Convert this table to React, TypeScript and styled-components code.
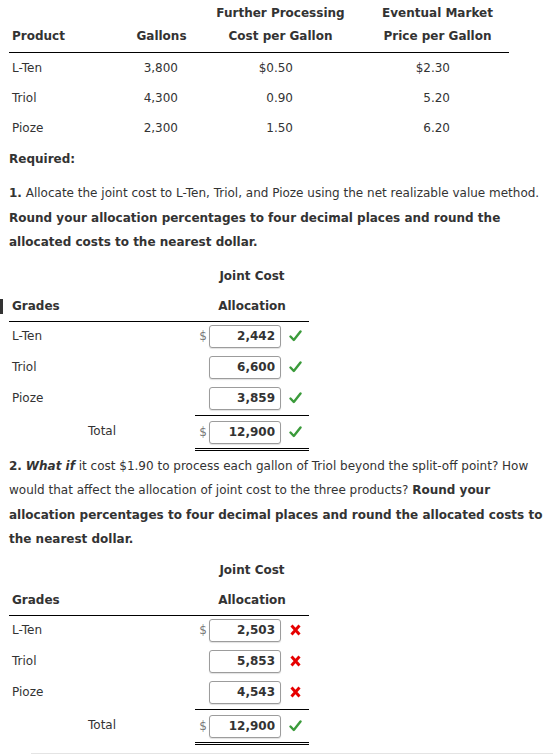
import React from "react";
import styled, { createGlobalStyle } from "styled-components";

const Global = createGlobalStyle`
  html, body { margin: 0; padding: 0; background: #fff; }
  body {
    font-family: "DejaVu Sans", Verdana, sans-serif;
    font-size: 12px;
    color: #333;
  }
`;

const Page = styled.div`
  width: 553px;
  box-sizing: border-box;
  padding: 2px 0 0 9px;
`;

/* ---------- product table ---------- */
const ProductGrid = styled.div`
  display: grid;
  grid-template-columns: 119px 67px 171px 143px;
  width: 500px;
`;

const HeadCell = styled.div<{ $align?: "left" | "center"; $pl?: number }>`
  display: flex;
  flex-direction: column;
  justify-content: flex-end;
  height: 46px;
  padding: 0 0 4px ${(p) => p.$pl ?? 0}px;
  border-bottom: 1px solid #000;
  font-weight: bold;
  line-height: 23px;
  text-align: ${(p) => p.$align ?? "center"};
  white-space: nowrap;
`;

const BodyCell = styled.div<{ $align?: "left" | "right"; $pr?: number; $pl?: number }>`
  height: 30px;
  line-height: 30px;
  text-align: ${(p) => p.$align ?? "right"};
  padding: 0 ${(p) => p.$pr ?? 0}px 0 ${(p) => p.$pl ?? 0}px;
  white-space: nowrap;
`;

/* ---------- text ---------- */
const Heading = styled.div`
  margin-top: 4px;
  line-height: 24px;
  font-weight: bold;
`;

const Para = styled.p<{ $mt: number }>`
  margin: ${(p) => p.$mt}px 0 0;
  line-height: 24.5px;
`;

/* ---------- allocation table ---------- */
const AllocGrid = styled.div<{ $mt: number }>`
  display: grid;
  grid-template-columns: 186px 14px 72px 28px;
  width: 300px;
  margin-top: ${(p) => p.$mt}px;
`;

const AllocHead = styled.div<{ $span?: number; $line?: boolean; $marker?: boolean; $pl?: number }>`
  position: relative;
  grid-column: span ${(p) => p.$span ?? 1};
  height: 30px;
  line-height: 30px;
  font-weight: bold;
  text-align: ${(p) => (p.$span ? "center" : "left")};
  padding-left: ${(p) => p.$pl ?? 0}px;
  border-bottom: ${(p) => (p.$line ? "1px solid #000" : "none")};
  &::before {
    content: "";
    display: ${(p) => (p.$marker ? "block" : "none")};
    position: absolute;
    left: -9px;
    top: 8px;
    width: 3px;
    height: 15px;
    background: #333;
  }
`;

const Cell = styled.div<{ $total?: boolean; $ruled?: boolean; $justify?: string; $pl?: number; $pr?: number }>`
  display: flex;
  align-items: center;
  justify-content: ${(p) => p.$justify ?? "flex-start"};
  height: 23px;
  padding: ${(p) => (p.$total ? "5px 0 4px" : "3px 0 5px")};
  padding-left: ${(p) => p.$pl ?? 0}px;
  padding-right: ${(p) => p.$pr ?? 0}px;
  border-top: ${(p) => (p.$ruled ? "1px solid #000" : "none")};
  border-bottom: ${(p) => (p.$ruled ? "3px double #000" : "none")};
  white-space: nowrap;
`;

const Dollar = styled.span`
  color: #7a7a7a;
`;

const AmountBox = styled.input`
  box-sizing: border-box;
  width: 72px;
  height: 23px;
  margin: 0;
  padding: 0 5px;
  border: 1px solid #9c9c9c;
  border-radius: 3px;
  box-shadow: 0 1px 1px rgba(0, 0, 0, 0.12);
  background: #fff;
  font-family: inherit;
  font-size: 12px;
  font-weight: bold;
  color: #333;
  text-align: right;
  outline: none;
`;

const Divider = styled.div`
  height: 1px;
  margin: 8px 0 0 22px;
  background: #e4e4e4;
`;

const CheckIcon = () => (
  <svg width="13" height="12" viewBox="0 0 13 12" aria-hidden="true">
    <path d="M1.5 6.5 L4.8 10 L11.5 1.5" fill="none" stroke="#3b9b3b" strokeWidth="2.4" strokeLinecap="round" strokeLinejoin="round" />
  </svg>
);

const CrossIcon = () => (
  <svg width="11" height="12" viewBox="0 0 11 12" aria-hidden="true">
    <path d="M1.5 1.5 L9.5 10.5 M9.5 1.5 L1.5 10.5" fill="none" stroke="#e60000" strokeWidth="2.9" strokeLinecap="butt" />
  </svg>
);

type Row = { name: string; value: string; ok: boolean };

const AllocationTable = ({
  rows,
  total,
  marker,
  mt,
}: {
  rows: Row[];
  total: string;
  marker?: boolean;
  mt: number;
}) => (
  <AllocGrid $mt={mt}>
    <AllocHead />
    <AllocHead $span={3}>Joint Cost</AllocHead>
    <AllocHead $line $marker={marker} $pl={3}>
      Grades
    </AllocHead>
    <AllocHead $span={3} $line>
      Allocation
    </AllocHead>
    {rows.map((r, i) => (
      <React.Fragment key={r.name}>
        <Cell $pl={3}>{r.name}</Cell>
        <Cell $justify="flex-end" $pr={2}>
          {i === 0 ? <Dollar>$</Dollar> : null}
        </Cell>
        <Cell>
          <AmountBox readOnly value={r.value} />
        </Cell>
        <Cell $justify="center">{r.ok ? <CheckIcon /> : <CrossIcon />}</Cell>
      </React.Fragment>
    ))}
    <Cell $total $pl={79}>
      Total
    </Cell>
    <Cell $total $ruled $justify="flex-end" $pr={2}>
      <Dollar>$</Dollar>
    </Cell>
    <Cell $total $ruled>
      <AmountBox readOnly value={total} />
    </Cell>
    <Cell $total $ruled $justify="center">
      <CheckIcon />
    </Cell>
  </AllocGrid>
);

const products = [
  { name: "L-Ten", gallons: "3,800", cost: "$0.50", price: "$2.30" },
  { name: "Triol", gallons: "4,300", cost: "0.90", price: "5.20" },
  { name: "Pioze", gallons: "2,300", cost: "1.50", price: "6.20" },
];

export default function App() {
  return (
    <Page>
      <Global />
      <ProductGrid>
        <HeadCell $align="left" $pl={3}>
          <span>Product</span>
        </HeadCell>
        <HeadCell>
          <span>Gallons</span>
        </HeadCell>
        <HeadCell>
          <span>Further Processing</span>
          <span>Cost per Gallon</span>
        </HeadCell>
        <HeadCell>
          <span>Eventual Market</span>
          <span>Price per Gallon</span>
        </HeadCell>
        {products.map((p) => (
          <React.Fragment key={p.name}>
            <BodyCell $align="left" $pl={3}>
              {p.name}
            </BodyCell>
            <BodyCell $pr={17}>{p.gallons}</BodyCell>
            <BodyCell $pr={73}>{p.cost}</BodyCell>
            <BodyCell $pr={59}>{p.price}</BodyCell>
          </React.Fragment>
        ))}
      </ProductGrid>

      <Heading>Required:</Heading>

      <Para $mt={10}>
        <b>1.</b> Allocate the joint cost to L-Ten, Triol, and Pioze using the net realizable value method.{" "}
        <b>Round your allocation percentages to four decimal places and round the allocated costs to the nearest dollar.</b>
      </Para>

      <AllocationTable
        mt={6}
        marker
        rows={[
          { name: "L-Ten", value: "2,442", ok: true },
          { name: "Triol", value: "6,600", ok: true },
          { name: "Pioze", value: "3,859", ok: true },
        ]}
        total="12,900"
      />

      <Para $mt={3}>
        <b>2.</b>{" "}
        <b>
          <i>What if</i>
        </b>{" "}
        it cost $1.90 to process each gallon of Triol beyond the split-off point? How would that affect the
        allocation of joint cost to the three products?{" "}
        <b>
          Round your allocation percentages to four decimal places and round the allocated costs to the nearest
          dollar.
        </b>
      </Para>

      <AllocationTable
        mt={3}
        rows={[
          { name: "L-Ten", value: "2,503", ok: false },
          { name: "Triol", value: "5,853", ok: false },
          { name: "Pioze", value: "4,543", ok: false },
        ]}
        total="12,900"
      />

      <Divider />
    </Page>
  );
}
